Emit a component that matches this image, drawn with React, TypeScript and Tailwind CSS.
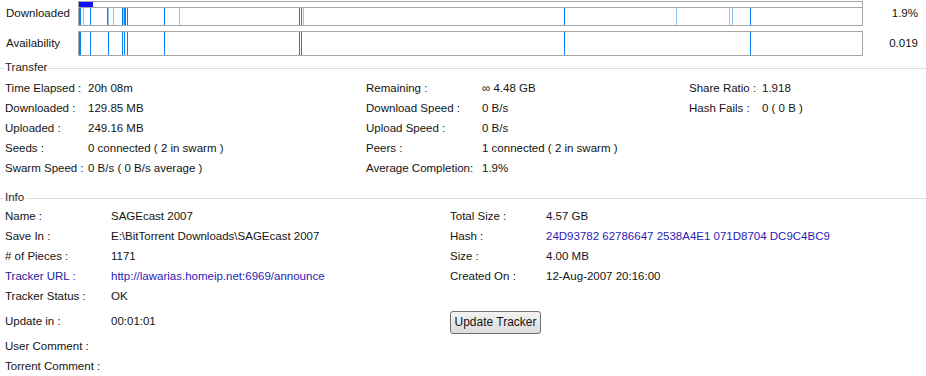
import React from "react";

const DARK = "#0a80f6";
const LIGHT = "#8ec4fb";

// tick positions (page x) inside the bars
const downloadedTicks: [number, string][] = [
  [79, DARK], [80, DARK], [83, LIGHT], [90, DARK], [107, DARK], [108, LIGHT],
  [113, LIGHT], [122, DARK], [123, LIGHT], [124, DARK], [125, DARK], [127, DARK],
  [164, DARK], [179, LIGHT], [299, DARK], [301, DARK], [303, LIGHT], [564, DARK],
  [676, LIGHT], [729, LIGHT], [732, LIGHT], [750, DARK],
];

const availabilityTicks: [number, string][] = [
  [79, DARK], [80, DARK], [90, DARK], [108, DARK], [122, DARK], [124, DARK],
  [127, DARK], [164, DARK], [299, DARK], [301, DARK], [564, DARK], [750, DARK],
];

function Bar({ ticks, strip }: { ticks: [number, string][]; strip?: boolean }) {
  const top = strip ? 7 : 1;
  return (
    <svg width={785} height={25} className="block">
      {strip && (
        <>
          <rect x={0.5} y={0.5} width={784} height={6} fill="#fff" stroke="#a6a6a6" />
          <rect x={1} y={1} width={14} height={5} fill="#1010f2" />
        </>
      )}
      <rect
        x={0.5}
        y={strip ? 6.5 : 0.5}
        width={784}
        height={strip ? 18 : 24}
        fill="#fff"
        stroke="#a6a6a6"
      />
      {ticks.map(([x, c], i) => (
        <rect key={i} x={x - 78} y={top} width={1} height={24 - top} fill={c} />
      ))}
    </svg>
  );
}

function Section({ title, width }: { title: string; width: string }) {
  return (
    <div className="flex items-center h-[14px]">
      <div className="w-[4px] h-px bg-[#d9e0e5]" />
      <span className={`${width} pl-[1px] text-[#1e1e1e]`}>{title}</span>
      <div className="flex-1 h-px bg-[#d9e0e5]" />
    </div>
  );
}

const transferLeft = [
  ["Time Elapsed :", "20h 08m"],
  ["Downloaded :", "129.85 MB"],
  ["Uploaded :", "249.16 MB"],
  ["Seeds :", "0 connected ( 2 in swarm )"],
  ["Swarm Speed :", "0 B/s ( 0 B/s average )"],
];

const transferMid = [
  ["Remaining :", "\u221e 4.48 GB"],
  ["Download Speed :", "0 B/s"],
  ["Upload Speed :", "0 B/s"],
  ["Peers :", "1 connected ( 2 in swarm )"],
  ["Average Completion:", "1.9%"],
];

const transferRight = [
  ["Share Ratio :", "1.918"],
  ["Hash Fails :", "0 ( 0 B )"],
];

const infoLeft = [
  ["Name :", "SAGEcast 2007"],
  ["Save In :", "E:\\BitTorrent Downloads\\SAGEcast 2007"],
  ["# of Pieces :", "1171"],
  ["Tracker URL :", "http://lawarias.homeip.net:6969/announce"],
  ["Tracker Status :", "OK"],
];

const infoRight = [
  ["Total Size :", "4.57 GB"],
  ["Hash :", "24D93782 62786647 2538A4E1 071D8704 DC9C4BC9"],
  ["Size :", "4.00 MB"],
  ["Created On :", "12-Aug-2007 20:16:00"],
];

function Col({
  rows,
  labelW,
  blue,
}: {
  rows: string[][];
  labelW: string;
  blue?: string[];
}) {
  return (
    <div className="flex flex-col">
      {rows.map(([label, value]) => {
        const isBlue = blue?.includes(label);
        return (
          <div key={label} className="flex items-center h-[20px] whitespace-nowrap">
            <span className={`${labelW} ${isBlue ? "text-[#24209e]" : ""}`}>{label}</span>
            <span className={isBlue || label === "Hash :" ? "text-[#2a1db4]" : ""}>{value}</span>
          </div>
        );
      })}
    </div>
  );
}

export default function App() {
  return (
    <div
      className="w-[926px] h-[376px] bg-white text-[11.5px] text-[#141414] overflow-hidden"
      style={{ fontFamily: '"Liberation Sans", Arial, sans-serif' }}
    >
      {/* bars */}
      <div className="flex items-start pt-px h-[31px]">
        <div className="w-[78px] pl-[6px] h-[26px] flex items-center">Downloaded</div>
        <Bar ticks={downloadedTicks} strip />
        <div className="flex-1 pr-[8px] h-[26px] flex items-center justify-end">1.9%</div>
      </div>
      <div className="flex items-start h-[30px]">
        <div className="w-[78px] pl-[6px] h-[25px] flex items-center">Availability</div>
        <Bar ticks={availabilityTicks} />
        <div className="flex-1 pr-[8px] h-[25px] flex items-center justify-end">0.019</div>
      </div>

      {/* transfer */}
      <Section title="Transfer" width="w-[44px]" />
      <div className="flex pl-[5px] pt-[4px]">
        <div className="w-[361px]">
          <Col rows={transferLeft} labelW="w-[83px]" />
        </div>
        <div className="w-[323px]">
          <Col rows={transferMid} labelW="w-[116px]" />
        </div>
        <Col rows={transferRight} labelW="w-[73px]" />
      </div>

      {/* info */}
      <div className="pt-[12px]">
        <Section title="Info" width="w-[22px]" />
      </div>
      <div className="flex pl-[5px] pt-[2px]">
        <div className="w-[445px] flex flex-col">
          <Col rows={infoLeft} labelW="w-[106px]" blue={["Tracker URL :"]} />
          <div className="flex items-center h-[30px]">
            <span className="w-[106px]">Update in :</span>
            <span>00:01:01</span>
          </div>
          <div className="flex items-center h-[20px]">User Comment :</div>
          <div className="flex items-center h-[20px]">Torrent Comment :</div>
        </div>
        <div className="flex flex-col">
          <Col rows={infoRight} labelW="w-[96px]" />
          <div className="h-[20px]" />
          <div className="h-[30px] flex items-center">
            <button className="w-[91px] h-[23px] rounded-[3px] border border-[#707070] bg-gradient-to-b from-[#f2f2f2] to-[#dcdcdc] text-[#141414] text-[12px]">
              Update Tracker
            </button>
          </div>
        </div>
      </div>
    </div>
  );
}
